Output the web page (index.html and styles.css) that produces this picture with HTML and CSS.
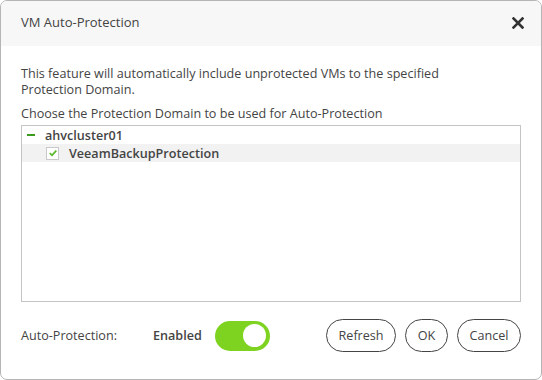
FILE: index.html
```
<!DOCTYPE html>
<html>
<head>
<meta charset="utf-8">
<link rel="stylesheet" href="styles.css">
</head>
<body>
<div class="dialog">
  <div class="header">
    <span class="title">VM Auto-Protection</span>
    <svg class="close" width="12" height="12" viewBox="0 0 12 12"><path d="M1.5 1.5 L10.5 10.5 M10.5 1.5 L1.5 10.5" stroke="#333" stroke-width="2.6" stroke-linecap="square"/></svg>
  </div>
  <div class="body">
    <p class="desc">This feature will automatically include unprotected VMs to the specified<br>Protection Domain.</p>
    <p class="choose">Choose the Protection Domain to be used for Auto-Protection</p>
    <div class="tree">
      <div class="row parent"><span class="minus"></span><span class="name">ahvcluster01</span></div>
      <div class="row child"><span class="check"><svg width="10" height="10" viewBox="0 0 10 10"><path d="M1.8 5.2 L4 7.3 L8.3 2.6" fill="none" stroke="#5cb82a" stroke-width="1.8"/></svg></span><span class="name">VeeamBackupProtection</span></div>
    </div>
    <div class="footer">
      <span class="label">Auto-Protection:</span>
      <span class="state">Enabled</span>
      <span class="toggle"><span class="knob"></span></span>
      <div class="buttons">
        <button class="btn">Refresh</button>
        <button class="btn">OK</button>
        <button class="btn">Cancel</button>
      </div>
    </div>
  </div>
</div>
</body>
</html>
```
FILE: styles.css
```
* { box-sizing: border-box; }
html, body { margin: 0; padding: 0; background: #fff; }
body { font-family: "Open Sans", "Noto Sans", sans-serif; color: #444; font-size: 12.6px; }
.dialog {
  width: 542px; height: 380px;
  border: 1px solid #b5b5b5;
  border-radius: 7px;
  overflow: hidden;
  display: flex; flex-direction: column;
}
.header {
  height: 45px; background: #f7f7f7;
  display: flex; align-items: center; justify-content: space-between;
  padding: 0 17px 3px 20px;
}
.title { font-size: 13px; color: #444; }
.close { display: block; margin-top: 2px; }
.body { flex: 1; padding: 20px 20px 0 20px; display: flex; flex-direction: column; }
.desc { margin: 0; line-height: 16px; }
.choose { margin: 8px 0 3px; line-height: 16px; }
.tree {
  height: 177px; border: 1px solid #c4c4c4;
  flex-shrink: 0;
}
.row { height: 18px; display: flex; align-items: center; font-weight: 600; font-size: 12.6px; color: #444; }
.parent { padding-left: 5px; }
.minus { width: 8px; height: 2px; background: #3c9a1e; margin-right: 10px; }
.child { background: #f2f2f2; padding-left: 24px; }
.check {
  width: 13px; height: 13px; border: 1px solid #c9c9c9; background: #fff;
  display: flex; align-items: center; justify-content: center; margin-right: 10px;
}
.check svg { display: block; }
.footer { display: flex; align-items: center; margin-top: 17px; height: 33px; }
.label { width: 132px; }
.state { font-weight: 600; margin-right: 13px; }
.toggle {
  width: 55px; height: 30px; border-radius: 15px; background: #7ed321;
  display: flex; align-items: center; justify-content: flex-end; padding-right: 4px;
}
.knob { width: 23px; height: 23px; border-radius: 50%; background: #fff; }
.buttons { margin-left: auto; display: flex; gap: 9px; }
.btn {
  font-family: inherit; font-size: 12.6px; color: #444;
  background: #fff; border: 1px solid #444; border-radius: 17px;
  height: 33px; padding: 0 11.5px; min-width: 43px; cursor: pointer;
}
```
